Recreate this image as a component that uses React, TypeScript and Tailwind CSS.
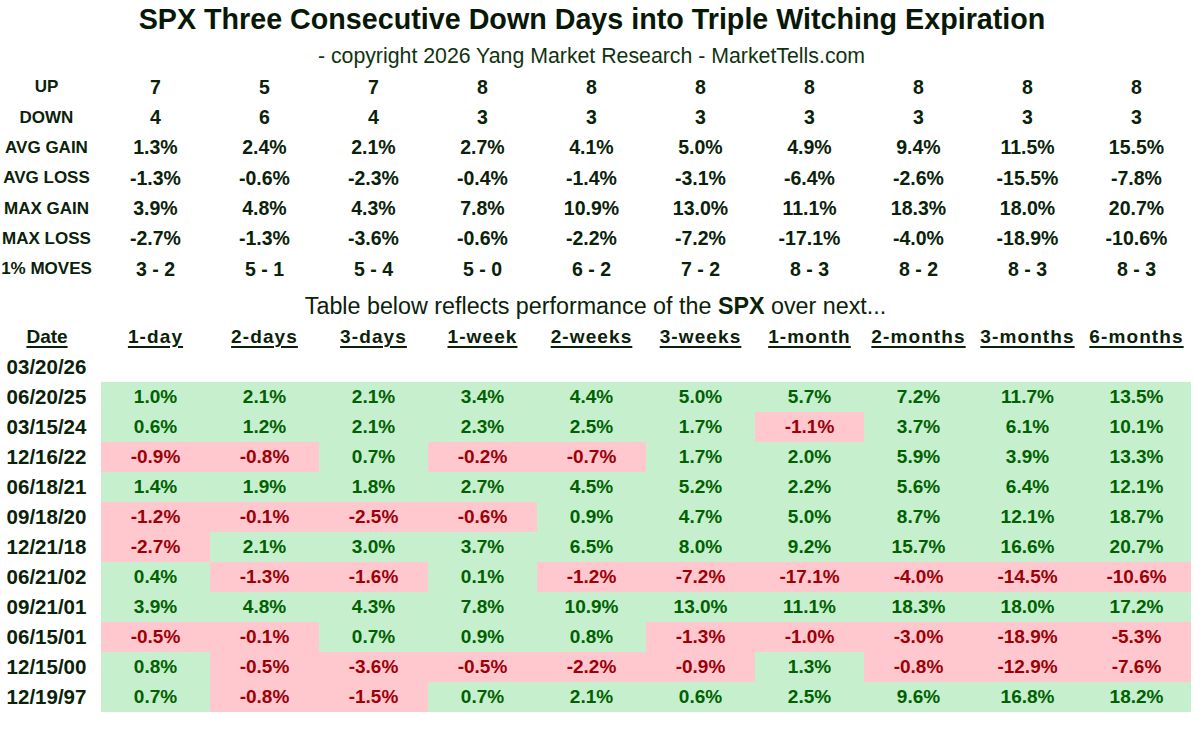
const periods = ["1-day", "2-days", "3-days", "1-week", "2-weeks", "3-weeks", "1-month", "2-months", "3-months", "6-months"];

const stats: [string, string[]][] = [
  ["UP", ["7", "5", "7", "8", "8", "8", "8", "8", "8", "8"]],
  ["DOWN", ["4", "6", "4", "3", "3", "3", "3", "3", "3", "3"]],
  ["AVG GAIN", ["1.3%", "2.4%", "2.1%", "2.7%", "4.1%", "5.0%", "4.9%", "9.4%", "11.5%", "15.5%"]],
  ["AVG LOSS", ["-1.3%", "-0.6%", "-2.3%", "-0.4%", "-1.4%", "-3.1%", "-6.4%", "-2.6%", "-15.5%", "-7.8%"]],
  ["MAX GAIN", ["3.9%", "4.8%", "4.3%", "7.8%", "10.9%", "13.0%", "11.1%", "18.3%", "18.0%", "20.7%"]],
  ["MAX LOSS", ["-2.7%", "-1.3%", "-3.6%", "-0.6%", "-2.2%", "-7.2%", "-17.1%", "-4.0%", "-18.9%", "-10.6%"]],
  ["1% MOVES", ["3 - 2", "5 - 1", "5 - 4", "5 - 0", "6 - 2", "7 - 2", "8 - 3", "8 - 2", "8 - 3", "8 - 3"]],
];

const rows: [string, string[]][] = [
  ["06/20/25", ["1.0%", "2.1%", "2.1%", "3.4%", "4.4%", "5.0%", "5.7%", "7.2%", "11.7%", "13.5%"]],
  ["03/15/24", ["0.6%", "1.2%", "2.1%", "2.3%", "2.5%", "1.7%", "-1.1%", "3.7%", "6.1%", "10.1%"]],
  ["12/16/22", ["-0.9%", "-0.8%", "0.7%", "-0.2%", "-0.7%", "1.7%", "2.0%", "5.9%", "3.9%", "13.3%"]],
  ["06/18/21", ["1.4%", "1.9%", "1.8%", "2.7%", "4.5%", "5.2%", "2.2%", "5.6%", "6.4%", "12.1%"]],
  ["09/18/20", ["-1.2%", "-0.1%", "-2.5%", "-0.6%", "0.9%", "4.7%", "5.0%", "8.7%", "12.1%", "18.7%"]],
  ["12/21/18", ["-2.7%", "2.1%", "3.0%", "3.7%", "6.5%", "8.0%", "9.2%", "15.7%", "16.6%", "20.7%"]],
  ["06/21/02", ["0.4%", "-1.3%", "-1.6%", "0.1%", "-1.2%", "-7.2%", "-17.1%", "-4.0%", "-14.5%", "-10.6%"]],
  ["09/21/01", ["3.9%", "4.8%", "4.3%", "7.8%", "10.9%", "13.0%", "11.1%", "18.3%", "18.0%", "17.2%"]],
  ["06/15/01", ["-0.5%", "-0.1%", "0.7%", "0.9%", "0.8%", "-1.3%", "-1.0%", "-3.0%", "-18.9%", "-5.3%"]],
  ["12/15/00", ["0.8%", "-0.5%", "-3.6%", "-0.5%", "-2.2%", "-0.9%", "1.3%", "-0.8%", "-12.9%", "-7.6%"]],
  ["12/19/97", ["0.7%", "-0.8%", "-1.5%", "0.7%", "2.1%", "0.6%", "2.5%", "9.6%", "16.8%", "18.2%"]],
];

export default function App() {
  return (
    <div className="w-[1200px] h-[731px] bg-white overflow-hidden font-['Liberation_Sans',Arial,sans-serif] text-[#0a220a]">
      <div className="w-[1191px]">
        {/* heading */}
        <div className="h-[38px] flex items-center justify-center pr-[7px]">
          <h1 className="text-[28.7px] font-bold leading-none text-[#071807]">
            SPX Three Consecutive Down Days into Triple Witching Expiration
          </h1>
        </div>
        <div className="h-[34px] flex items-center justify-center pr-[8px] pt-[4px]">
          <p className="text-[21.3px] leading-none text-[#0f330f]">
            - copyright 2026 Yang Market Research - MarketTells.com
          </p>
        </div>

        {/* summary stats */}
        <div className="grid grid-cols-[101px_repeat(10,109px)] auto-rows-[30.33px]">
          {stats.map(([label, vals]) => (
            <div key={label} className="contents">
              <div className="flex items-center justify-center pr-[8px] text-[17px] font-bold">{label}</div>
              {vals.map((v, i) => (
                <div key={i} className="flex items-center justify-center text-[19.5px] font-bold">
                  {v}
                </div>
              ))}
            </div>
          ))}
        </div>

        <div className="h-[38px] flex items-center justify-center pt-[6px]">
          <p className="text-[23.3px] leading-none">
            Table below reflects performance of the <span className="font-bold">SPX</span> over next...
          </p>
        </div>

        {/* performance table */}
        <div className="grid grid-cols-[101px_repeat(10,109px)] auto-rows-[30px]">
          <div className="flex items-center justify-center pr-[7px] text-[19px] font-bold underline decoration-2 underline-offset-[3px]">
            Date
          </div>
          {periods.map((p) => (
            <div
              key={p}
              className="flex items-center justify-center text-[19px] font-bold tracking-[1.1px] underline decoration-2 underline-offset-[3px]"
            >
              {p}
            </div>
          ))}

          <div className="flex items-center justify-center pr-[8px] text-[20.5px] font-bold">03/20/26</div>
          {periods.map((p) => (
            <div key={p} />
          ))}

          {rows.map(([date, vals]) => (
            <div key={date} className="contents">
              <div className="flex items-center justify-center pr-[8px] text-[20.5px] font-bold">{date}</div>
              {vals.map((v, i) => {
                const neg = v.startsWith("-");
                return (
                  <div
                    key={i}
                    className={
                      neg
                        ? "flex items-center justify-center text-[19px] font-bold bg-[#ffc7ce] text-[#9c0006]"
                        : "flex items-center justify-center text-[19px] font-bold bg-[#c6efce] text-[#006100]"
                    }
                  >
                    {v}
                  </div>
                );
              })}
            </div>
          ))}
        </div>
      </div>
    </div>
  );
}
